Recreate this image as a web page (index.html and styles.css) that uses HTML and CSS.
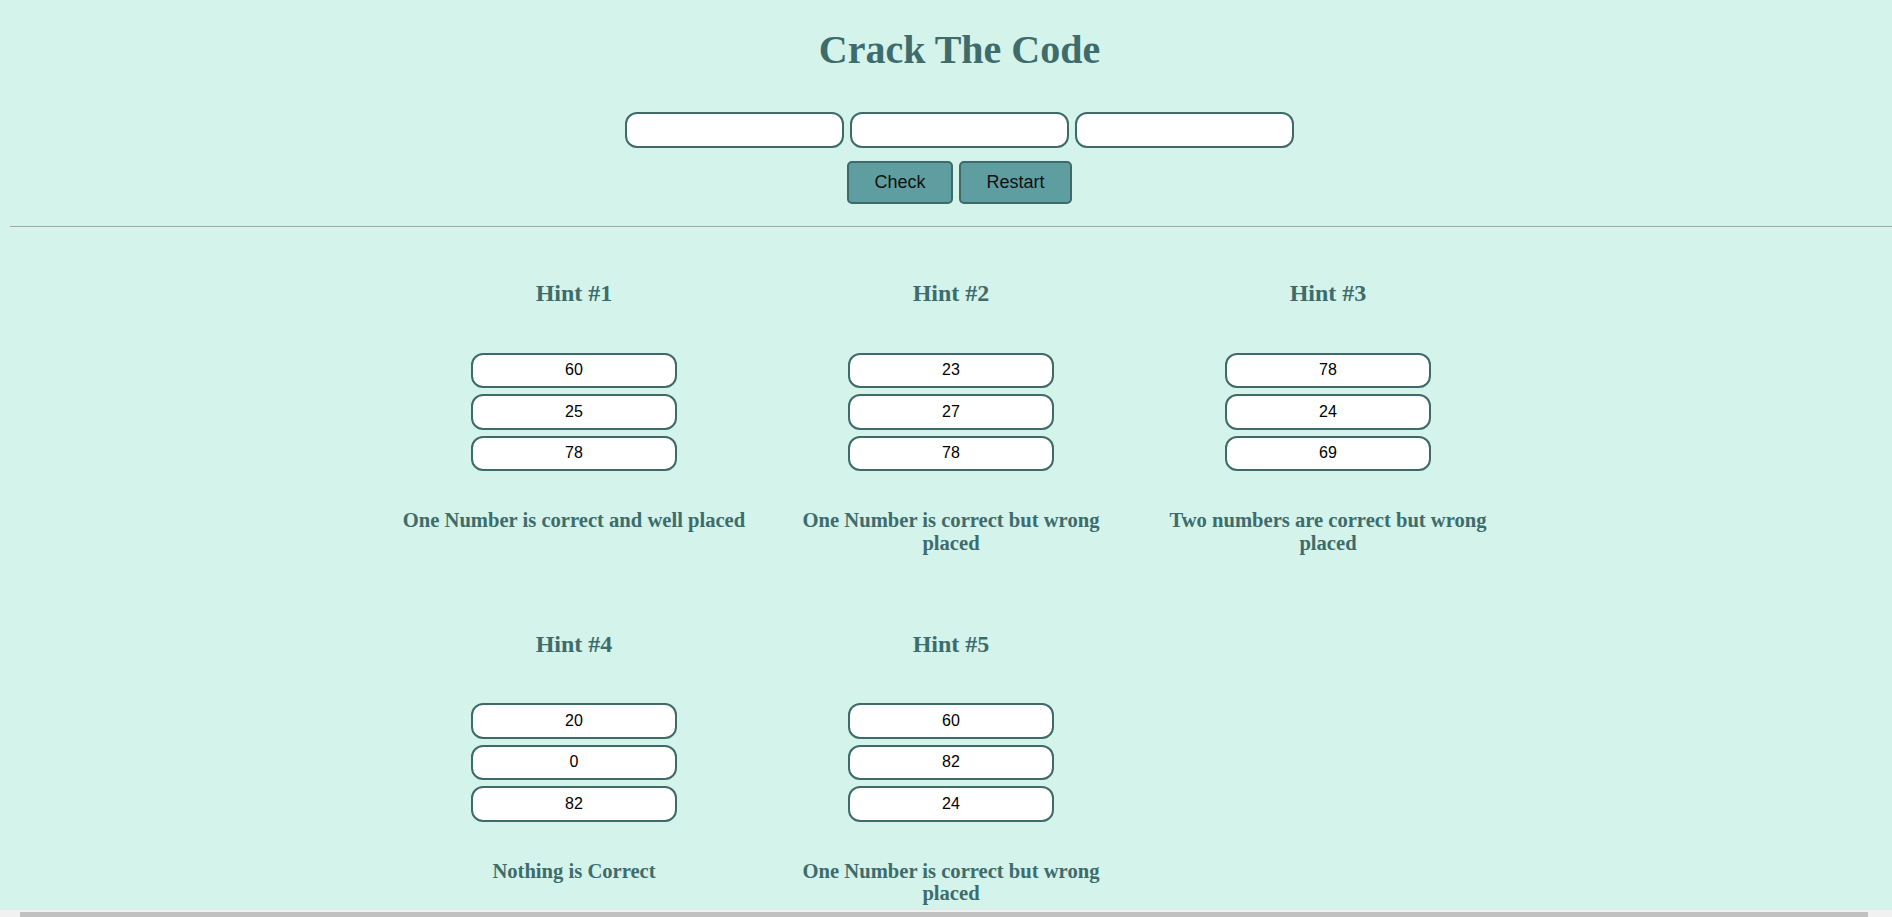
FILE: index.html
```html
<!DOCTYPE html>
<html lang="en">
<head>
<meta charset="utf-8">
<title>Crack The Code</title>
<link rel="stylesheet" href="styles.css">
</head>
<body>
<div class="page">
  <header class="top">
    <h1 class="title">Crack The Code</h1>
    <div class="code-inputs">
      <input class="code-input" type="text">
      <input class="code-input" type="text">
      <input class="code-input" type="text">
    </div>
    <div class="actions">
      <button class="btn btn-check">Check</button>
      <button class="btn btn-restart">Restart</button>
    </div>
  </header>
  <hr class="divider">
  <section class="hints">
    <div class="hint">
      <h2 class="hint-title">Hint #1</h2>
      <div class="hint-values">
        <div class="hint-value">60</div>
        <div class="hint-value">25</div>
        <div class="hint-value">78</div>
      </div>
      <p class="hint-text">One Number is correct and well placed</p>
    </div>
    <div class="hint">
      <h2 class="hint-title">Hint #2</h2>
      <div class="hint-values">
        <div class="hint-value">23</div>
        <div class="hint-value">27</div>
        <div class="hint-value">78</div>
      </div>
      <p class="hint-text">One Number is correct but wrong placed</p>
    </div>
    <div class="hint">
      <h2 class="hint-title">Hint #3</h2>
      <div class="hint-values">
        <div class="hint-value">78</div>
        <div class="hint-value">24</div>
        <div class="hint-value">69</div>
      </div>
      <p class="hint-text">Two numbers are correct but wrong placed</p>
    </div>
    <div class="hint">
      <h2 class="hint-title">Hint #4</h2>
      <div class="hint-values">
        <div class="hint-value">20</div>
        <div class="hint-value">0</div>
        <div class="hint-value">82</div>
      </div>
      <p class="hint-text">Nothing is Correct</p>
    </div>
    <div class="hint">
      <h2 class="hint-title">Hint #5</h2>
      <div class="hint-values">
        <div class="hint-value">60</div>
        <div class="hint-value">82</div>
        <div class="hint-value">24</div>
      </div>
      <p class="hint-text">One Number is correct but wrong placed</p>
    </div>
  </section>
</div>
<div class="hscroll" aria-hidden="true"><div class="hscroll-thumb"></div></div>
</body>
</html>
```

FILE: styles.css
```css
html {
  overflow: hidden;
}

body {
  margin: 0;
  background: #d4f3ea;
  font-family: "Liberation Serif", "Times New Roman", serif;
  color: #3e6c6c;
}

.page {
  padding-top: 27px;
}

.top {
  display: flex;
  flex-direction: column;
  align-items: center;
  padding-left: 27px;
}

.title {
  margin: 0;
  font-size: 40px;
  line-height: 46px;
  font-weight: bold;
  color: #3e6c6c;
}

.code-inputs {
  display: flex;
  gap: 6px;
  margin-top: 39px;
}

.code-input {
  box-sizing: border-box;
  width: 219px;
  height: 36px;
  margin: 0;
  border: 2px solid #3e6a6a;
  border-radius: 12px;
  background: #fff;
  font-family: "Liberation Sans", Arial, sans-serif;
  font-size: 16px;
  text-align: center;
}

.actions {
  display: flex;
  gap: 6px;
  margin-top: 13px;
}

.btn {
  box-sizing: border-box;
  height: 43px;
  padding: 0 25.5px;
  margin: 0;
  border: 2px solid #3e6a6a;
  border-radius: 5px;
  background: #5f9ea0;
  color: #111;
  font-family: "Liberation Sans", Arial, sans-serif;
  font-size: 18px;
}

.divider {
  margin: 22px 0 0 10px;
  height: 0;
  border: 0;
  border-top: 1px solid #9ca6a3;
  border-bottom: 1px solid #e9efed;
}

.hints {
  display: grid;
  grid-template-columns: repeat(3, 377px);
  justify-content: center;
  row-gap: 76px;
  padding-top: 52px;
  padding-left: 10px;
  align-items: start;
}

.hint {
  display: flex;
  flex-direction: column;
  align-items: center;
  padding: 0 12px;
}

.hint-title {
  margin: 0;
  font-size: 24px;
  line-height: 27.6px;
  font-weight: bold;
}

.hint-values {
  display: flex;
  flex-direction: column;
  gap: 6px;
  margin-top: 45px;
}

.hint-value {
  box-sizing: border-box;
  width: 206px;
  height: 35.5px;
  border: 2px solid #3e6a6a;
  border-radius: 12px;
  background: #fff;
  display: flex;
  align-items: center;
  justify-content: center;
  font-family: "Liberation Sans", Arial, sans-serif;
  font-size: 16px;
  color: #000;
}

.hint-text {
  margin: 38px 0 0;
  font-size: 20.6px;
  line-height: 22.7px;
  font-weight: bold;
  text-align: center;
}

.hscroll {
  position: fixed;
  left: 0;
  right: 0;
  bottom: 0;
  height: 7px;
  background: #f1f1f1;
  border-top: 1px solid #e6e6e6;
}

.hscroll-thumb {
  margin: 2px 24px 0 20px;
  height: 5px;
  background: #c1c1c1;
}
```
